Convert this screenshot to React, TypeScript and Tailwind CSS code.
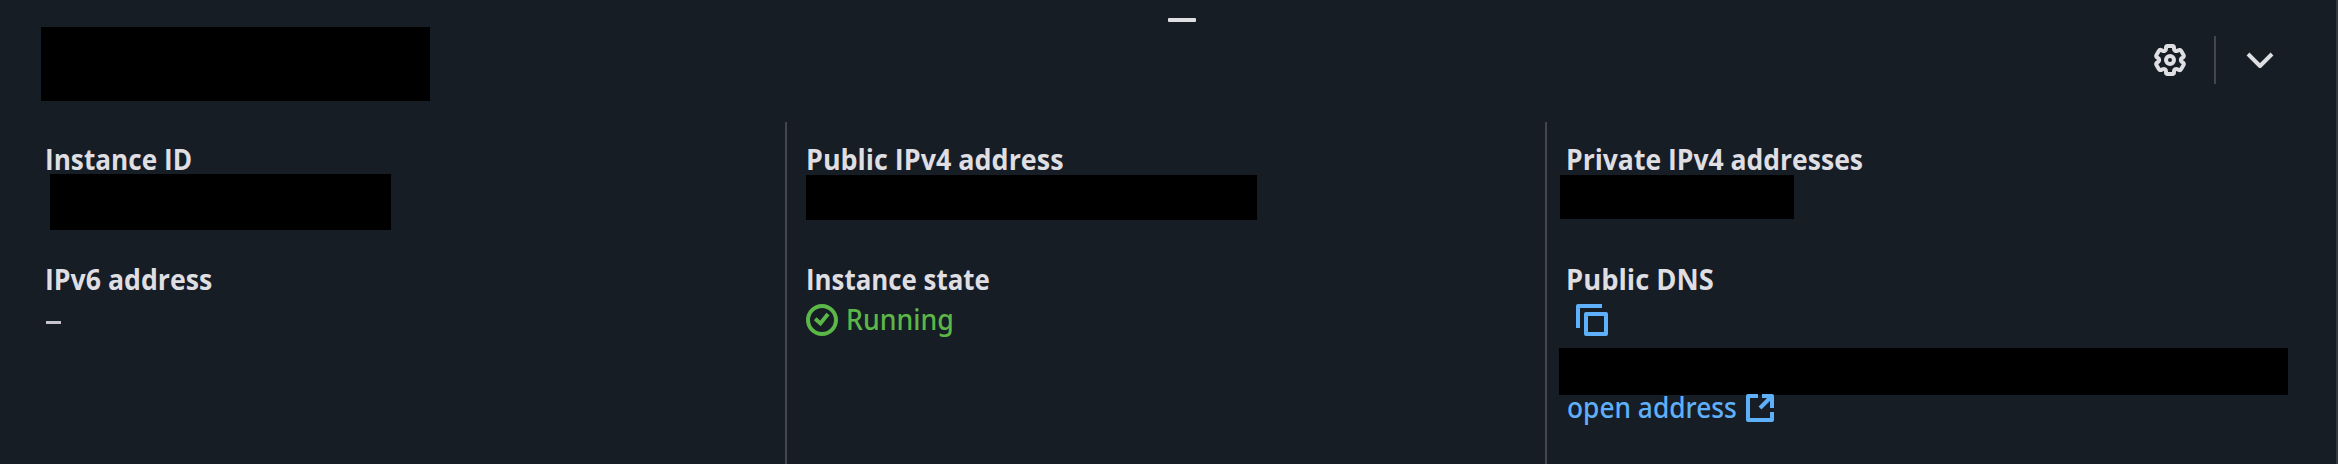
import React from "react";

function Label({ children, className }: { children: string; className: string }) {
  return (
    <h3
      className={`h-10 origin-left font-['Open_Sans','Noto_Sans',sans-serif] text-[28px] leading-10 font-bold whitespace-nowrap text-[#dedee3] ${className}`}
    >
      {children}
    </h3>
  );
}

function GearIcon() {
  return (
    <svg className="size-8" viewBox="0 0 16 16" fill="none" stroke="#dedee3" strokeWidth="2" strokeLinejoin="round">
      <path d="M6.8 1h2.4c.5 0 .8.4.8.9v.5c0 .9.9 1.400 1.700 1l.5-.3c.5-.3 1.100-.1 1.400.4l1.100 1.900c.3.5.1 1.100-.3 1.400l-.4.2c-.8.5-.8 1.500 0 2l.4.2c.4.3.6.9.3 1.400l-1.100 1.900c-.3.5-.9.700-1.400.4l-.5-.3c-.8-.4-1.700.1-1.700 1v.5c0 .5-.3.9-.8.9H6.800c-.5 0-.8-.4-.8-.9v-.5c0-.9-.9-1.400-1.700-1l-.5.3c-.5.3-1.100.1-1.400-.4l-1.100-1.900c-.3-.5-.1-1.100.3-1.400l.4-.2c.8-.5.8-1.500 0-2l-.4-.2c-.4-.3-.6-.9-.3-1.400l1.100-1.900c.3-.5.9-.7 1.400-.4l.5.3c.8.4 1.700-.1 1.700-1v-.5c0-.5.3-.9.8-.9Z" />
      <circle cx="8" cy="8" r="2" />
    </svg>
  );
}

function ChevronIcon() {
  return (
    <svg className="size-8" viewBox="0 0 16 16" fill="none" stroke="#dedee3" strokeWidth="2" strokeLinejoin="round">
      <path d="m2 5 6 6 6-6" />
    </svg>
  );
}

function CheckIcon() {
  return (
    <svg className="size-8" viewBox="0 0 16 16" fill="none" stroke="#5bb747" strokeWidth="2">
      <circle cx="8" cy="8" r="7" />
      <path d="m4.600 7.400 2.600 2.300 3.800-4.700" />
    </svg>
  );
}

function CopyIcon() {
  return (
    <svg className="size-8" viewBox="0 0 16 16" fill="none" stroke="#5fb0fb" strokeWidth="2" strokeLinejoin="round">
      <path d="M13 1H1v11" />
      <path d="M5 5h10v10H5z" />
    </svg>
  );
}

function ExternalIcon() {
  return (
    <svg className="mt-0.5 size-8" viewBox="0 0 16 16" fill="none" stroke="#5fb0fb" strokeWidth="2" strokeLinejoin="round">
      <path d="M7 2H2v12h12v-4" />
      <path d="M9 2h5v6M14 2 8 8" />
    </svg>
  );
}

export default function App() {
  return (
    <div className="flex h-[464px] w-[2338px] flex-col overflow-hidden border-r-2 border-[#34383f] bg-[#171d25] font-['Noto_Sans','Open_Sans',sans-serif]">
      <header className="flex h-[122px] shrink-0">
        <div className="mt-[27px] ml-[40.500px] h-[73.500px] w-[389.500px] bg-black" />
        <div className="mt-[18px] ml-[738px] h-1 w-7 rounded-[1px] bg-[#dedee3]" />
        <div className="mt-9 mr-[60px] ml-auto flex h-12 items-center">
          <GearIcon />
          <div className="ml-7 h-12 w-0.5 bg-[#424650]" />
          <div className="ml-7">
            <ChevronIcon />
          </div>
        </div>
      </header>
      <main className="flex grow">
        <section className="w-[785px] pt-[17px] pl-[45px]">
          <Label className="scale-x-[0.935]">Instance ID</Label>
          <div className="-mt-[5px] ml-[5px] h-[56px] w-[341px] bg-black" />
          <Label className="mt-[29px] scale-x-[0.953]">IPv6 address</Label>
          <div className="mt-[22px] ml-px h-[3px] w-[15px] bg-[#c6c2d0]" />
        </section>
        <section className="w-[760px] border-l-2 border-[#424650] pt-[17px] pl-[19px]">
          <Label className="scale-x-[0.961]">Public IPv4 address</Label>
          <div className="-mt-1 h-[44.500px] w-[451px] bg-black" />
          <Label className="mt-[39.500px] scale-x-[0.924]">Instance state</Label>
          <div className="mt-[5px] flex h-8 items-center gap-2 text-[#5bb747]">
            <CheckIcon />
            <span className="-mt-0.5 origin-left scale-x-[0.955] text-[28px] leading-10 font-medium">Running</span>
          </div>
        </section>
        <section className="w-[791px] border-l-2 border-[#424650] pt-[17px] pl-[11px]">
          <Label className="ml-2 scale-x-[0.947]">Private IPv4 addresses</Label>
          <div className="-mt-1 ml-[1.500px] h-[43.500px] w-[234px] bg-black" />
          <Label className="mt-[40.500px] ml-2 scale-x-[0.977]">Public DNS</Label>
          <div className="mt-[5px] ml-[18px] h-8">
            <CopyIcon />
          </div>
          <div className="mt-3 ml-[0.500px] h-[46.500px] w-[729.500px] bg-black" />
          <div className="-mt-[7.500px] ml-[9px] flex h-10 items-center text-[#5fb0fb]">
            <span className="w-[177px] origin-left scale-x-[0.940] text-[28px] leading-10 font-medium whitespace-nowrap">
              open address
            </span>
            <ExternalIcon />
          </div>
        </section>
      </main>
    </div>
  );
}
